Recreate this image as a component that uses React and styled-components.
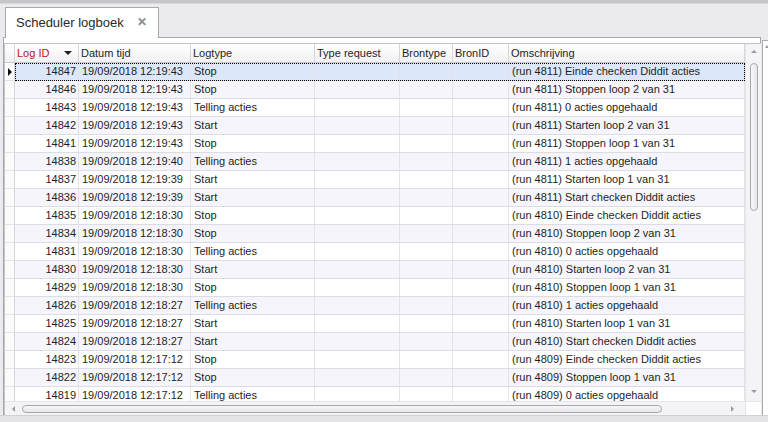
import React from "react";
import styled, { createGlobalStyle } from "styled-components";

const GlobalStyle = createGlobalStyle`
  html, body {
    margin: 0;
    padding: 0;
    background: #ebebef;
  }
  body {
    font-family: "Liberation Sans", Arial, sans-serif;
    font-size: 11px;
    color: #1e1e1e;
  }
`;

const rows = [
  ["14847", "19/09/2018 12:19:43", "Stop", "(run 4811) Einde checken Diddit acties"],
  ["14846", "19/09/2018 12:19:43", "Stop", "(run 4811) Stoppen loop 2 van 31"],
  ["14843", "19/09/2018 12:19:43", "Telling acties", "(run 4811) 0 acties opgehaald"],
  ["14842", "19/09/2018 12:19:43", "Start", "(run 4811) Starten loop 2 van 31"],
  ["14841", "19/09/2018 12:19:43", "Stop", "(run 4811) Stoppen loop 1 van 31"],
  ["14838", "19/09/2018 12:19:40", "Telling acties", "(run 4811) 1 acties opgehaald"],
  ["14837", "19/09/2018 12:19:39", "Start", "(run 4811) Starten loop 1 van 31"],
  ["14836", "19/09/2018 12:19:39", "Start", "(run 4811) Start checken Diddit acties"],
  ["14835", "19/09/2018 12:18:30", "Stop", "(run 4810) Einde checken Diddit acties"],
  ["14834", "19/09/2018 12:18:30", "Stop", "(run 4810) Stoppen loop 2 van 31"],
  ["14831", "19/09/2018 12:18:30", "Telling acties", "(run 4810) 0 acties opgehaald"],
  ["14830", "19/09/2018 12:18:30", "Start", "(run 4810) Starten loop 2 van 31"],
  ["14829", "19/09/2018 12:18:30", "Stop", "(run 4810) Stoppen loop 1 van 31"],
  ["14826", "19/09/2018 12:18:27", "Telling acties", "(run 4810) 1 acties opgehaald"],
  ["14825", "19/09/2018 12:18:27", "Start", "(run 4810) Starten loop 1 van 31"],
  ["14824", "19/09/2018 12:18:27", "Start", "(run 4810) Start checken Diddit acties"],
  ["14823", "19/09/2018 12:17:12", "Stop", "(run 4809) Einde checken Diddit acties"],
  ["14822", "19/09/2018 12:17:12", "Stop", "(run 4809) Stoppen loop 1 van 31"],
  ["14819", "19/09/2018 12:17:12", "Telling acties", "(run 4809) 0 acties opgehaald"],
];

const COLS = "64px 112px 124px 85px 53px 56px 236px";

function App() {
  return (
    <Page>
      <GlobalStyle />
      <TopStrip />
      <TabRow>
        <Tab>
          <span>Scheduler logboek</span>
          <Close>✕</Close>
        </Tab>
      </TabRow>
      <Body>
        <Panel>
          <GridFrame>
            <MainArea>
              <Table>
                <HeaderRow>
                  <IndicatorHead />
                  <HeaderCells>
                    <HeadCell sorted>
                      Log ID
                      <SortArrow />
                    </HeadCell>
                    <HeadCell>Datum tijd</HeadCell>
                    <HeadCell>Logtype</HeadCell>
                    <HeadCell>Type request</HeadCell>
                    <HeadCell>Brontype</HeadCell>
                    <HeadCell>BronID</HeadCell>
                    <HeadCell>Omschrijving</HeadCell>
                  </HeaderCells>
                </HeaderRow>
                {rows.map((r, i) => (
                  <Row key={r[0]}>
                    <Indicator>{i === 0 && <RowArrow />}</Indicator>
                    <RowCells selected={i === 0} alt={i % 2 === 1}>
                      <Cell right>{r[0]}</Cell>
                      <Cell>{r[1]}</Cell>
                      <Cell>{r[2]}</Cell>
                      <Cell />
                      <Cell />
                      <Cell />
                      <Cell>{r[3]}</Cell>
                    </RowCells>
                  </Row>
                ))}
              </Table>
              <VScroll>
                <ArrowUp />
                <VTrack>
                  <VThumb />
                </VTrack>
                <ArrowDown />
              </VScroll>
            </MainArea>
            <HScroll>
              <ArrowLeft />
              <HThumb />
              <HSpacer />
              <ArrowRight />
              <Corner />
            </HScroll>
          </GridFrame>
        </Panel>
        <SidePeek>
          <PeekArrow />
        </SidePeek>
      </Body>
      <BottomStrip />
    </Page>
  );
}

export default App;

const Page = styled.div`
  width: 768px;
  height: 422px;
  display: flex;
  flex-direction: column;
  overflow: hidden;
  background: #ebebef;
`;

const TopStrip = styled.div`
  height: 3px;
  background: #c6c6ca;
  border-bottom: 1px solid #d8d8dc;
`;

const TabRow = styled.div`
  height: 33px;
  display: flex;
  align-items: flex-end;
  padding-left: 5px;
  position: relative;
  z-index: 1;
`;

const Tab = styled.div`
  height: 31px;
  box-sizing: border-box;
  display: flex;
  align-items: center;
  gap: 13px;
  padding: 0 11px 2px 10px;
  background: #ffffff;
  border: 1px solid #a8a8ac;
  border-bottom: none;
  margin-bottom: -1px;
  font-size: 13px;
  color: #2a2a2a;
`;

const Close = styled.span`
  font-size: 12px;
  font-weight: bold;
  color: #8a8a8e;
`;

const Body = styled.div`
  display: flex;
  height: 378px;
`;

const Panel = styled.div`
  margin-left: 3px;
  width: 758px;
  box-sizing: border-box;
  border: 1px solid #a8a8ac;
  background: #ffffff;
  padding: 5px 0 0 0;
  display: flex;
`;

const GridFrame = styled.div`
  flex: 1;
  display: flex;
  flex-direction: column;
  border-left: 1px solid #c4c4c8;
  border-top: 1px solid #c4c4c8;
  height: 371px;
  box-sizing: border-box;
`;

const MainArea = styled.div`
  display: flex;
  height: 357px;
`;

const Table = styled.div`
  width: 740px;
  overflow: hidden;
  display: flex;
  flex-direction: column;
`;

const HeaderRow = styled.div`
  display: flex;
  height: 19px;
  box-sizing: border-box;
  flex-shrink: 0;
  background: linear-gradient(#ffffff, #f1f1f4);
  border-bottom: 1px solid #c8c8cc;
`;

const IndicatorHead = styled.div`
  width: 10px;
  border-right: 1px solid #d6d6da;
`;

const HeaderCells = styled.div`
  display: grid;
  grid-template-columns: ${COLS};
`;

const HeadCell = styled.div`
  display: flex;
  align-items: center;
  justify-content: space-between;
  padding: 0 6px 0 2px;
  border-right: 1px solid #d6d6da;
  color: ${(p) => (p.sorted ? "#c0141e" : "#1e1e1e")};
  line-height: 18px;
  white-space: nowrap;
`;

const SortArrow = styled.span`
  width: 0;
  height: 0;
  border-left: 4px solid transparent;
  border-right: 4px solid transparent;
  border-top: 4px solid #202020;
`;

const Row = styled.div`
  display: flex;
  height: 18px;
  flex-shrink: 0;
`;

const Indicator = styled.div`
  width: 10px;
  box-sizing: border-box;
  border-right: 1px solid #d6d6da;
  border-bottom: 1px solid #e4e4e8;
  background: #fbfbfc;
  display: flex;
  align-items: center;
  justify-content: center;
`;

const RowArrow = styled.span`
  width: 0;
  height: 0;
  border-top: 4px solid transparent;
  border-bottom: 4px solid transparent;
  border-left: 4px solid #111;
`;

const RowCells = styled.div`
  display: grid;
  grid-template-columns: ${COLS};
  border-bottom: 1px solid #dcdce4;
  box-sizing: border-box;
  background: ${(p) => (p.selected ? "#dce7fa" : p.alt ? "#f6f5fb" : "#ffffff")};
  outline: ${(p) => (p.selected ? "1px dotted #000" : "none")};
  outline-offset: -1px;
`;

const Cell = styled.div`
  padding: 0 2px 0 3px;
  line-height: 17px;
  border-right: 1px solid #e2e2e8;
  text-align: ${(p) => (p.right ? "right" : "left")};
  white-space: nowrap;
  overflow: hidden;
`;

const VScroll = styled.div`
  width: 15px;
  display: flex;
  flex-direction: column;
  align-items: center;
  background: #f4f4f6;
  border-left: 1px solid #e6e6ea;
`;

const ArrowUp = styled.span`
  margin: 6px 0 4px;
  width: 0;
  height: 0;
  border-left: 3px solid transparent;
  border-right: 3px solid transparent;
  border-bottom: 3px solid #9a9a9e;
`;

const ArrowDown = styled.span`
  margin: 4px 0 8px;
  width: 0;
  height: 0;
  border-left: 3px solid transparent;
  border-right: 3px solid transparent;
  border-top: 3px solid #9a9a9e;
`;

const VTrack = styled.div`
  flex: 1;
  width: 100%;
  display: flex;
  flex-direction: column;
  align-items: center;
  padding-top: 6px;
`;

const VThumb = styled.div`
  width: 6px;
  height: 146px;
  border: 1px solid #a8a8ae;
  border-radius: 4px;
  background: linear-gradient(90deg, #f8f8f8, #e6e6ea);
`;

const HScroll = styled.div`
  height: 13px;
  display: flex;
  align-items: center;
  background: #f4f4f6;
  border-top: 1px solid #e6e6ea;
`;

const ArrowLeft = styled.span`
  margin: 0 7px 0 7px;
  width: 0;
  height: 0;
  border-top: 3px solid transparent;
  border-bottom: 3px solid transparent;
  border-right: 3px solid #9a9a9e;
`;

const ArrowRight = styled.span`
  margin: 0 11px 0 0;
  width: 0;
  height: 0;
  border-top: 3px solid transparent;
  border-bottom: 3px solid transparent;
  border-left: 3px solid #9a9a9e;
`;

const HThumb = styled.div`
  width: 638px;
  height: 6px;
  border: 1px solid #a8a8ae;
  border-radius: 4px;
  background: linear-gradient(#f8f8f8, #e6e6ea);
`;

const HSpacer = styled.div`
  flex: 1;
`;

const Corner = styled.div`
  width: 15px;
  height: 13px;
  background: #ffffff;
  border-left: 1px solid #e0e0e4;
`;

const SidePeek = styled.div`
  flex: 1;
  margin-top: 3px;
  margin-left: 1px;
  background: #ffffff;
  border-left: 1px solid #a8a8ac;
  border-top: 1px solid #a8a8ac;
  padding: 4px 0 0 2px;
`;

const PeekArrow = styled.span`
  display: block;
  width: 0;
  height: 0;
  border-left: 2px solid transparent;
  border-right: 2px solid transparent;
  border-bottom: 3px solid #9a9a9e;
`;

const BottomStrip = styled.div`
  flex: 1;
  background: #e4e4e8;
  border-top: 1px solid #d0d0d4;
`;
